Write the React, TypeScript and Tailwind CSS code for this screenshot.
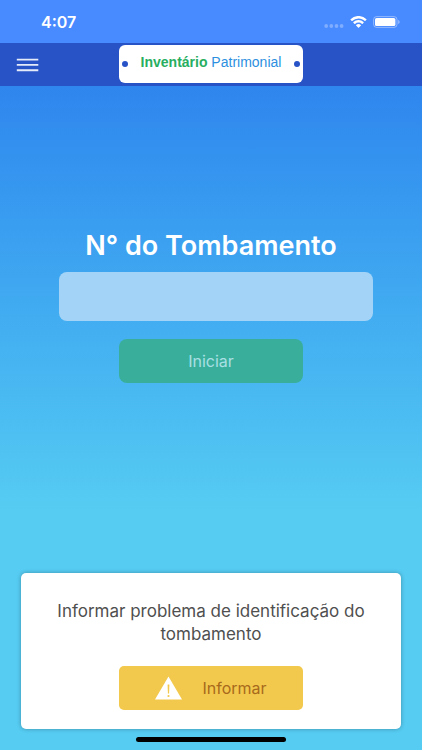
import type { FormEvent } from 'react'

function StatusBar() {
  return (
    <div className="flex h-[43px] items-center justify-between bg-[#488aff] pr-[22px] pl-[41px] text-white">
      <span className="text-base font-semibold">4:07</span>
      <div className="flex items-center gap-[6px]">
        <svg className="mt-2 h-1 w-5 text-white/30" viewBox="0 0 20 4" fill="currentColor" aria-hidden="true">
          <circle cx="2.2" cy="2" r="1.900" />
          <circle cx="7.3" cy="2" r="1.900" />
          <circle cx="12.500" cy="2" r="1.900" />
          <circle cx="17.600" cy="2" r="1.900" />
        </svg>
        <svg className="h-3 w-[17px]" viewBox="0.4 0.2 16.200 11.200" preserveAspectRatio="none" fill="currentColor" aria-hidden="true">
          <path d="M8.500 2.500c2.300 0 4.400.9 6 2.400.1.1.3.1.4 0l1.200-1.200c.1-.1.1-.3 0-.5a11 11 0 0 0-15.200 0c-.1.2-.1.4 0 .5l1.200 1.200c.1.1.3.1.4 0a8.700 8.700 0 0 1 6-2.400z" />
          <path d="M8.500 6.300c1.200 0 2.400.5 3.300 1.300.1.1.3.1.4 0l1.200-1.200c.1-.1.1-.3 0-.5a7.200 7.200 0 0 0-9.800 0c-.1.2-.1.4 0 .5l1.200 1.200c.1.1.3.1.4 0a4.900 4.900 0 0 1 3.300-1.300z" />
          <path d="M10.800 9c.1-.1.1-.3 0-.4a3.600 3.600 0 0 0-4.600 0c-.1.1-.1.3 0 .4l2.100 2.100c.1.1.3.1.4 0z" />
        </svg>
        <svg className="h-3 w-[27px]" viewBox="0 0 27 12" aria-hidden="true">
          <rect x=".6" y=".6" width="23.400" height="10.800" rx="3" fill="none" stroke="#fff" strokeOpacity=".4" />
          <rect x="2" y="2" width="20.400" height="8" rx="1.600" fill="#fff" />
          <path d="M25.200 4v4c.8-.3 1.400-1.100 1.400-2s-.6-1.700-1.400-2z" fill="#fff" fillOpacity=".45" />
        </svg>
      </div>
    </div>
  )
}

function Header() {
  return (
    <header className="grid h-[43px] grid-cols-[1fr_auto_1fr] items-center bg-[#2853c6] px-4">
      <button type="button" aria-label="Menu" className="w-fit text-[#e6ebfa]">
        <svg className="h-4 w-6" viewBox="0 0 24 16" fill="none" stroke="currentColor" strokeWidth="1.900" aria-hidden="true">
          <path d="M.8 2.600H22.300M.8 7.900H22.300M.8 13.200H22.300" />
        </svg>
      </button>
      <h1 className="mb-[2px] flex h-[38px] w-[184px] items-center justify-between rounded-md bg-white px-[3px] font-['Liberation_Sans',sans-serif] text-sm">
        <span className="size-[6px] rounded-full bg-[#2853c6]" />
        <span className="mb-1 text-[#2d8fe0]">
          <b className="text-[#27ae60]">Inventário</b> Patrimonial
        </span>
        <span className="size-[6px] rounded-full bg-[#2853c6]" />
      </h1>
    </header>
  )
}

function SearchForm() {
  const handleSubmit = (e: FormEvent) => e.preventDefault()

  return (
    <form onSubmit={handleSubmit} className="flex flex-col items-center px-[49px] pt-[140px]">
      <label htmlFor="tombamento" className="text-[27px] leading-10 font-semibold text-white">
        N° do Tombamento
      </label>
      <div className="mt-[6px] w-full pl-[10px]">
        <input
          id="tombamento"
          type="text"
          className="block h-[49px] w-full rounded-lg bg-[#a3d4f7] px-4 text-lg text-slate-700 outline-none"
        />
      </div>
      <button type="submit" className="mt-[18px] h-11 w-[184px] rounded-lg bg-[#39af9b] text-base text-[#a9dfe4]">
        Iniciar
      </button>
    </form>
  )
}

function ReportCard() {
  return (
    <section className="mx-[21px] mt-auto flex flex-col items-center rounded-[5px] bg-white px-8 pt-[27px] pb-[19px] shadow-[0_0_4px_rgba(0,0,0,0.3)]">
      <p className="text-center text-[17px] leading-[23px] text-[#4f4f4f]">
        Informar problema de identificação do tombamento
      </p>
      <button
        type="button"
        className="mt-5 flex h-11 w-[184px] items-center justify-center gap-5 rounded-[5px] bg-[#f2c94c] text-base text-[#a8691c]"
      >
        <svg className="h-6 w-[27px]" viewBox="0 0 27 24" aria-hidden="true">
          <path d="M13.500 .5 27 23.500H0z" fill="#fff" />
          <path d="M12.600 8.500h1.800l-.3 9h-1.200z" fill="#f2c94c" />
          <circle cx="13.500" cy="20" r="1.100" fill="#f2c94c" />
        </svg>
        Informar
      </button>
    </section>
  )
}

export default function App() {
  return (
    <div className="flex min-h-screen flex-col bg-[#56ccf2] font-[Inter,sans-serif]">
      <StatusBar />
      <Header />
      <main className="flex grow flex-col bg-linear-to-b from-[#2f86ee] to-[#56ccf2] to-[64%]">
        <SearchForm />
        <ReportCard />
        <div className="mx-auto my-2 h-[5px] w-[150px] rounded-full bg-black" />
      </main>
    </div>
  )
}
